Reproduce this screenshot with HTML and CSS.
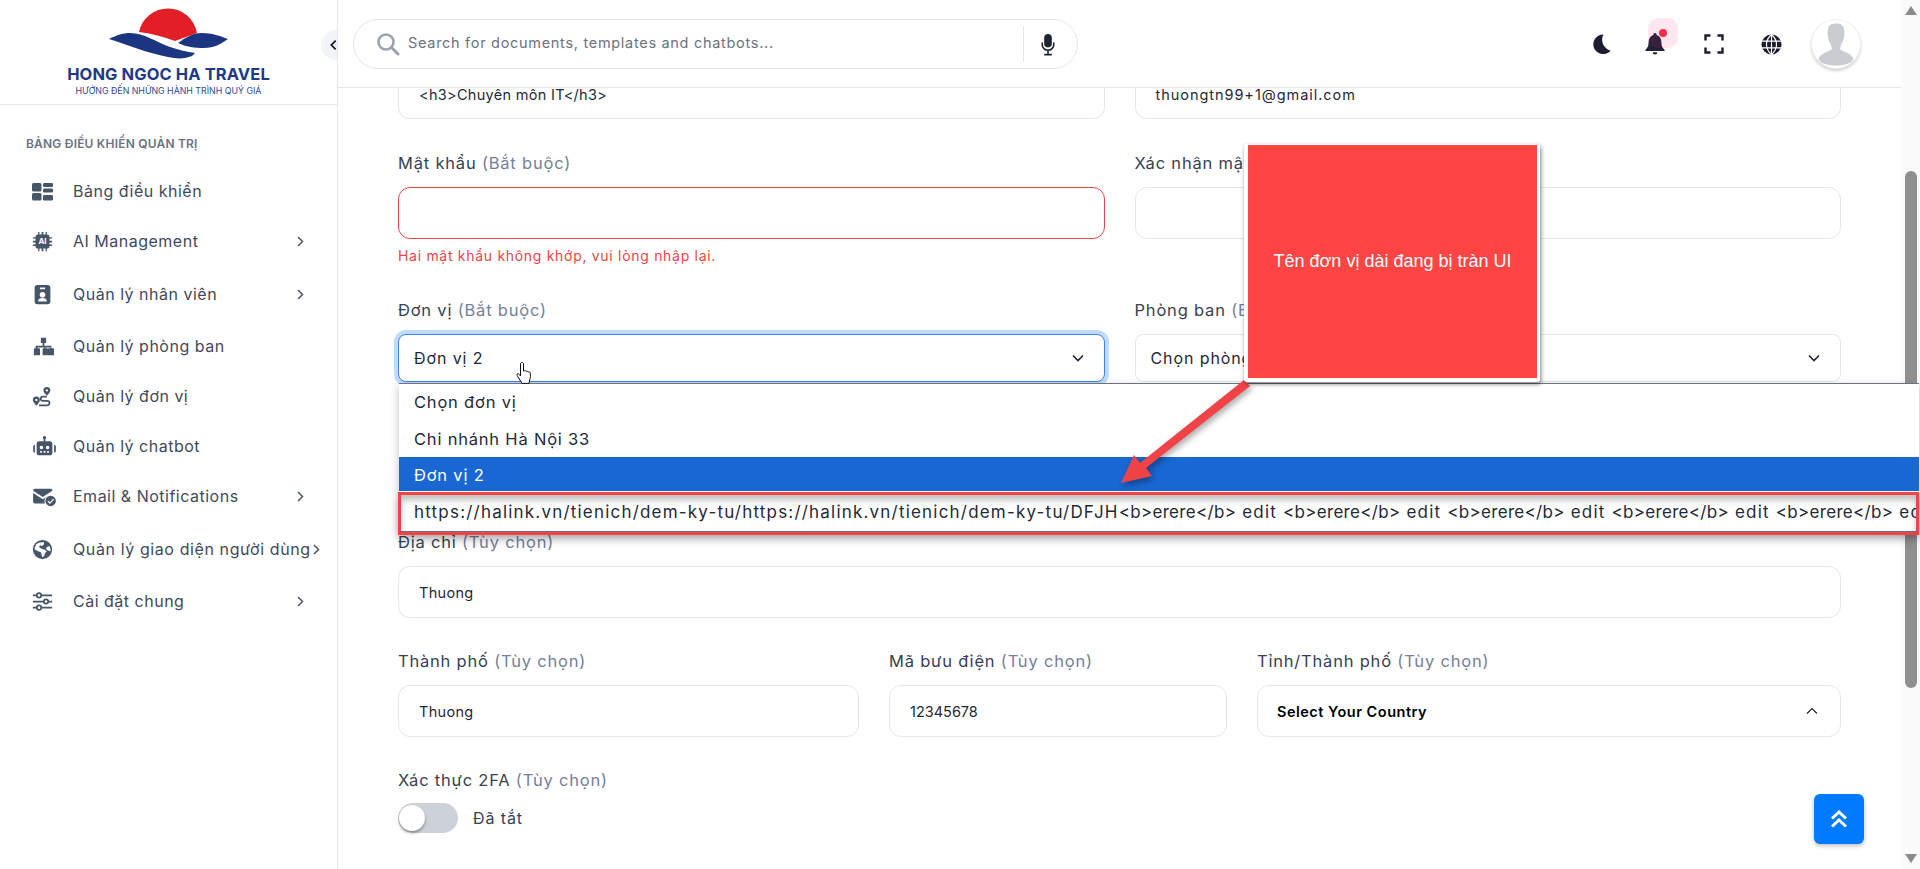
FILE: index.html
```html
<!DOCTYPE html>
<html lang="vi">
<head>
<meta charset="utf-8">
<title>Hong Ngoc Ha Travel</title>
<link rel="stylesheet" href="styles.css">
</head>
<body>
<div class="app">
  <aside class="sidebar">
    <div class="brand">
      <svg class="brand-mark" viewBox="0 0 130 52" width="130" height="52">
        <path fill="#e21f26" d="M35 24A29.500 29.500 0 0 1 93 25L71 33Q52 26 35 24Z"/>
        <path fill="#1c3580" d="M5 31C13 27 19 25 26 25c14 0 26 9 40 14 9 3 17 5 25 6l-3 3c-7 3-15 3-24 1C43 45 24 37 5 31Z"/>
        <path fill="#1c3580" d="M74 35c7-5 14-10 24-10 10 0 18 3 26 6-7 5-14 9-24 9-9 0-18-1-26-5Z"/>
      </svg>
      <div class="brand-name">HONG NGOC HA TRAVEL</div>
      <div class="brand-tag">HƯỚNG ĐẾN NHỮNG HÀNH TRÌNH QUÝ GIÁ</div>
    </div>
    <div class="nav-title">BẢNG ĐIỀU KHIỂN QUẢN TRỊ</div>
    <nav class="nav">
      <a class="nav-item"><svg class="nav-icon" viewBox="0 0 21 21"><rect x="0" y="2" width="9.500" height="8.500" rx="1.500"/><rect x="0" y="12" width="9.500" height="7.500" rx="1.500"/><rect x="11" y="2" width="10" height="4" rx="1.200"/><rect x="11" y="7.500" width="10" height="4" rx="1"/><rect x="11" y="14" width="10" height="5.500" rx="1.200"/></svg><span class="nav-label">Bảng điều khiển</span></a>
      <a class="nav-item"><span class="chip"><svg class="nav-icon" viewBox="0 0 24 24"><path d="M7 1h1.500v3H11V1h2v3h2.500V1H17v3a3 3 0 0 1 3 3h3v1.500h-3V11h3v2h-3v2.500h3V17h-3a3 3 0 0 1-3 3v3h-1.500v-3H13v3h-2v-3H8.500v3H7v-3a3 3 0 0 1-3-3H1v-1.500h3V13H1v-2h3V8.500H1V7h3a3 3 0 0 1 3-3Z"/></svg><span class="chip-text">AI</span></span><span class="nav-label">AI Management</span><svg class="nav-arrow" viewBox="0 0 7 11" width="7" height="11"><path d="M1 1l4.500 4.500L1 10" fill="none" stroke="#4b5563" stroke-width="1.500"/></svg></a>
      <a class="nav-item nav-far"><svg class="nav-icon" viewBox="0 0 24 24"><path fill-rule="evenodd" d="M6 1h12a3 3 0 0 1 3 3v16a3 3 0 0 1-3 3H6a3 3 0 0 1-3-3V4a3 3 0 0 1 3-3Zm3 3v2h6V4Zm3 5a3.200 3.200 0 1 0 0 6.400A3.200 3.200 0 0 0 12 9Zm-5 11h10c0-3-2-4-5-4s-5 1-5 4Z"/></svg><span class="nav-label">Quản lý nhân viên</span><svg class="nav-arrow" viewBox="0 0 7 11" width="7" height="11"><path d="M1 1l4.500 4.500L1 10" fill="none" stroke="#4b5563" stroke-width="1.500"/></svg></a>
      <a class="nav-item nav-mid"><svg class="nav-icon nav-icon-org" viewBox="0 0 24 24"><path d="M9 2h6v6h-2v3h8v3h2a1 1 0 0 1 1 1v6a1 1 0 0 1-1 1h-5a1 1 0 0 1-1-1v-6a1 1 0 0 1 1-1h2v-1h-6v1h2a1 1 0 0 1 1 1v6a1 1 0 0 1-1 1h-4a1 1 0 0 1-1-1v-6a1 1 0 0 1 1-1h1v-1H5v1h2a1 1 0 0 1 1 1v6a1 1 0 0 1-1 1H2a1 1 0 0 1-1-1v-6a1 1 0 0 1 1-1h1v-3h8V8H9Z"/></svg><span class="nav-label">Quản lý phòng ban</span></a>
      <a class="nav-item"><svg class="nav-icon" viewBox="0 0 24 24"><path fill-rule="evenodd" d="M17 1a4 4 0 0 1 4 4c0 2-2.500 4.500-4 6-1.500-1.500-4-4-4-6a4 4 0 0 1 4-4Zm0 2.700a1.300 1.300 0 1 0 0 2.600 1.300 1.300 0 0 0 0-2.600ZM5 12a4 4 0 0 1 4 4c0 2-2.500 5-4 6.500C3.500 21 1 18 1 16a4 4 0 0 1 4-4Zm0 2.700a1.300 1.300 0 1 0 0 2.600 1.300 1.300 0 0 0 0-2.600Z"/><path fill="none" stroke="#475569" stroke-width="2" d="M17 12h-4.500a2.500 2.500 0 0 0 0 5h5a2.500 2.500 0 0 1 0 5H8"/></svg><span class="nav-label">Quản lý đơn vị</span></a>
      <a class="nav-item"><svg class="nav-icon nav-icon-wide" viewBox="0 0 26 24"><path fill-rule="evenodd" d="M13 0a2 2 0 0 1 1 3.700V6h5a3 3 0 0 1 3 3v10a3 3 0 0 1-3 3H7a3 3 0 0 1-3-3V9a3 3 0 0 1 3-3h5V3.700A2 2 0 0 1 13 0ZM9.500 11a2 2 0 1 0 0 4 2 2 0 0 0 0-4Zm7 0a2 2 0 1 0 0 4 2 2 0 0 0 0-4ZM8 17v2h2v-2Zm4 0v2h2v-2Zm4 0v2h2v-2ZM2 10v9a2 2 0 0 1-2-2v-5a2 2 0 0 1 2-2Zm22 0a2 2 0 0 1 2 2v5a2 2 0 0 1-2 2Z"/></svg><span class="nav-label">Quản lý chatbot</span></a>
      <a class="nav-item"><svg class="nav-icon nav-icon-wide" viewBox="0 0 26 24"><path d="M2 3h18a2 2 0 0 1 2 2v.500l-11 7-11-7V5a2 2 0 0 1 2-2Z"/><path d="M0 8l11 7 7-4.500a7 7 0 0 0-4.500 9.500H2a2 2 0 0 1-2-2Z"/><path fill-rule="evenodd" d="M20 11a6 6 0 1 1 0 12 6 6 0 0 1 0-12Zm3 3.500-3.800 4-1.700-1.700-1 1 2.700 2.700 4.800-5Z"/></svg><span class="nav-label">Email &amp; Notifications</span><svg class="nav-arrow" viewBox="0 0 7 11" width="7" height="11"><path d="M1 1l4.500 4.500L1 10" fill="none" stroke="#4b5563" stroke-width="1.500"/></svg></a>
      <a class="nav-item nav-far"><svg class="nav-icon" viewBox="0 0 24 24"><path fill-rule="evenodd" d="M12 1a11 11 0 1 1 0 22 11 11 0 0 1 0-22ZM5 6a9 9 0 0 0-2 6l4 2 3 1 1 3 1 3 2-2 1-3 2-2-3-2-3-1-2-1-1-2 2-1 1 1 2-1 1-3c-3-1-7 0-9 2Zm12 3-1 2 2 2 3 1a9 9 0 0 0-1-6Z"/></svg><span class="nav-label nav-label-long">Quản lý giao diện người dùng</span><svg class="nav-arrow nav-arrow-tight" viewBox="0 0 7 11" width="7" height="11"><path d="M1 1l4.500 4.500L1 10" fill="none" stroke="#4b5563" stroke-width="1.500"/></svg></a>
      <a class="nav-item nav-mid"><svg class="nav-icon" viewBox="0 0 24 24" fill="none"><path stroke="#475569" stroke-width="2" fill="none" d="M1 5h22M1 12h22M1 19h22"/><circle cx="8" cy="5" r="2.500" fill="#fff" stroke="#475569" stroke-width="2"/><circle cx="16" cy="12" r="2.500" fill="#fff" stroke="#475569" stroke-width="2"/><circle cx="8" cy="19" r="2.500" fill="#fff" stroke="#475569" stroke-width="2"/></svg><span class="nav-label">Cài đặt chung</span><svg class="nav-arrow" viewBox="0 0 7 11" width="7" height="11"><path d="M1 1l4.500 4.500L1 10" fill="none" stroke="#4b5563" stroke-width="1.500"/></svg></a>
    </nav>
  </aside>

  <div class="content">
    <header class="topbar">
      <div class="search">
        <svg class="search-icon" viewBox="0 0 24 24" width="24" height="24"><circle cx="10" cy="10" r="7.500" fill="none" stroke="#9ca3af" stroke-width="2.600"/><path d="M15.500 15.500 22 22" stroke="#9ca3af" stroke-width="3" stroke-linecap="round"/></svg>
        <span class="search-text">Search for documents, templates and chatbots...</span>
        <span class="search-mic"><svg viewBox="0 0 16 24" width="16" height="23"><rect x="4" y="1" width="8" height="14" rx="4" fill="#1f2433"/><path d="M2 10v2a6 6 0 0 0 12 0v-2M8 18v4M4 22.500h8" fill="none" stroke="#1f2433" stroke-width="1.700"/></svg></span>
      </div>
      <div class="tools">
        <svg class="tool tool-moon" viewBox="0 0 24 24" width="20" height="20"><path fill="#1c1c30" d="M15 0.500A11.800 11.800 0 1 0 23.500 20 13.500 13.500 0 0 1 15 0.500Z"/></svg>
        <span class="tool-bell">
          <svg viewBox="0 0 24 24" width="22" height="22"><path fill="#22203a" d="M12 0a1.800 1.800 0 0 1 1.700 2.200C17 3.300 19 6 19 10c0 4 1 6 3.500 8.500v1H1.500v-1C4 16 5 14 5 10c0-4 2-6.700 5.300-7.800A1.800 1.800 0 0 1 12 0ZM9.500 21h5a2.500 2.500 0 0 1-5 0Z"/></svg>
          <span class="bell-halo"></span>
          <span class="bell-dot"></span>
        </span>
        <svg class="tool tool-screen" viewBox="0 0 20 20" width="20" height="20"><path fill="none" stroke="#1c1c30" stroke-width="2.400" d="M1.500 6.500V1.500h5M13.500 1.500h5v5M18.500 13.500v5h-5M6.500 18.500h-5v-5"/></svg>
        <svg class="tool tool-globe" viewBox="0 0 22 22" width="21" height="21"><circle cx="11" cy="11" r="10.500" fill="#1c1c30"/><path fill="none" stroke="#fff" stroke-width="1.200" d="M11 0v22M0 7.500h22M0 14.500h22M11 .5c-7 6-7 15 0 21M11 .5c7 6 7 15 0 21"/></svg>
        <span class="avatar"><svg viewBox="0 0 48 48" width="48" height="48"><path fill="#c9ccd0" d="M18 5c4-2 10-2 12 0 2 2 3 7 2 13-1 3-2 5-3 7l-1 4c3 3 11 4 13 9 1 2-2 5-6 6-7 2-15 2-22 0-4-1-7-4-6-6 2-5 10-6 13-9l-1-4c-1-2-3-5-3-8-1-5 0-10 2-12Z"/></svg></span>
      </div>
    </header>
    <main class="main">
      <div class="row row-two row-first">
        <div class="field"><div class="control control-clipped"><span class="value">&lt;h3&gt;Chuyên môn IT&lt;/h3&gt;</span></div></div>
        <div class="field"><div class="control control-clipped"><span class="value value-mail">thuongtn99+1@gmail.com</span></div></div>
      </div>
      <div class="row row-two row-pass">
        <div class="field">
          <div class="label">Mật khẩu <em>(Bắt buộc)</em></div>
          <div class="control control-error"></div>
          <div class="error">Hai mật khẩu không khớp, vui lòng nhập lại.</div>
        </div>
        <div class="field">
          <div class="label">Xác nhận mật khẩu <em>(Bắt buộc)</em></div>
          <div class="control"></div>
        </div>
      </div>
      <div class="row row-two row-unit">
        <div class="field">
          <div class="label">Đơn vị <em>(Bắt buộc)</em></div>
          <div class="control control-select control-focus"><span class="select-value">Đơn vị 2</span><svg class="caret" viewBox="0 0 12 8" width="12" height="8"><path d="M1 1.500 6 6.500l5-5" fill="none" stroke="#1f2937" stroke-width="1.700"/></svg></div>
        </div>
        <div class="field">
          <div class="label">Phòng ban <em>(Bắt buộc)</em></div>
          <div class="control control-select"><span class="select-value">Chọn phòng ban</span><svg class="caret" viewBox="0 0 12 8" width="12" height="8"><path d="M1 1.500 6 6.500l5-5" fill="none" stroke="#1f2937" stroke-width="1.700"/></svg></div>
        </div>
      </div>
      <div class="row">
        <div class="field">
          <div class="label">Địa chỉ <em>(Tùy chọn)</em></div>
          <div class="control"><span class="value">Thuong</span></div>
        </div>
      </div>
      <div class="row row-three">
        <div class="field">
          <div class="label">Thành phố <em>(Tùy chọn)</em></div>
          <div class="control"><span class="value">Thuong</span></div>
        </div>
        <div class="field">
          <div class="label">Mã bưu điện <em>(Tùy chọn)</em></div>
          <div class="control"><span class="value value-num">12345678</span></div>
        </div>
        <div class="field">
          <div class="label">Tỉnh/Thành phố <em>(Tùy chọn)</em></div>
          <div class="control control-select control-country"><span class="country">Select Your Country</span><svg class="caret" viewBox="0 0 12 8" width="12" height="8"><path d="M1 6.500 6 1.500l5 5" fill="none" stroke="#1f2937" stroke-width="1.200"/></svg></div>
        </div>
      </div>
      <div class="row">
        <div class="label label-2fa">Xác thực 2FA <em>(Tùy chọn)</em></div>
        <div class="toggle-line"><span class="toggle"><span class="knob"></span></span><span class="toggle-text">Đã tắt</span></div>
      </div>
    </main>
  </div>

  <div class="scrollbar">
    <span class="sb-up"></span>
    <span class="sb-thumb"></span>
    <span class="sb-down"></span>
  </div>

  <button class="collapse" type="button"><svg viewBox="0 0 8 12" width="8" height="12"><path d="M6.500 1 1.500 6l5 5" fill="none" stroke="#111827" stroke-width="2"/></svg></button>

  <ul class="options">
    <li class="option">Chọn đơn vị</li>
    <li class="option">Chi nhánh Hà Nội 33</li>
    <li class="option option-active">Đơn vị 2</li>
    <li class="option option-long">https://halink.vn/tienich/dem-ky-tu/https://halink.vn/tienich/dem-ky-tu/DFJH<span class="tag">&lt;b&gt;erere&lt;/b&gt;</span> edit <span class="tag">&lt;b&gt;erere&lt;/b&gt;</span> edit <span class="tag">&lt;b&gt;erere&lt;/b&gt;</span> edit <span class="tag">&lt;b&gt;erere&lt;/b&gt;</span> edit <span class="tag">&lt;b&gt;erere&lt;/b&gt;</span> edit</li>
  </ul>
  <div class="mark-outline"></div>

  <svg class="mark-arrow" viewBox="0 0 140 110" width="140" height="110"><polygon fill="#f04347" points="1,105 14,77 20,85 124,2 130,8 26,90 32,98"/></svg>
  <div class="mark-note">Tên đơn vị dài đang bị tràn UI</div>

  <svg class="hand" viewBox="0 0 18 24" width="18" height="24"><path fill="#fff" stroke="#111" stroke-width="1" d="M6 1.500c1 0 1.500.7 1.500 1.500v7l1-.2c.8-.4 1.600 0 1.800.5.800-.4 1.700 0 1.900.6.800-.3 1.800.1 2 1 .5 2.500.3 5-.5 7l-.7 3.500H6L2 16c-.8-1-1.200-2.500-.8-3 .5-.7 1.600-.3 2.300.7L4.500 15V3c0-.8.600-1.500 1.500-1.500Z"/></svg>

  <button class="to-top" type="button"><svg viewBox="0 0 18 20" width="18" height="20"><path d="M2 9.500 9 3l7 6.500M2 17.500 9 11l7 6.500" fill="none" stroke="#fff" stroke-width="3"/></svg></button>
</div>
</body>
</html>
```
FILE: styles.css
```css
* { box-sizing: border-box; }
html, body { margin: 0; height: 100%; overflow: hidden; background: #fff; }
body { font-family: Inter, "Noto Sans", "Liberation Sans", sans-serif; color: #1f2937; }
.app { position: relative; display: flex; width: 1920px; height: 869px; overflow: hidden; }

/* sidebar */
.sidebar { flex: 0 0 338px; border-right: 1px solid #e5e7eb; display: flex; flex-direction: column; }
.brand { height: 105px; border-bottom: 1px solid #e5e7eb; display: flex; flex-direction: column; align-items: center; padding-top: 8px; }
.brand-mark { display: block; flex: none; }
.brand-name { font-size: 16.500px; line-height: 18px; font-weight: 700; color: #1f3a85; letter-spacing: .1px; margin-top: 5px; white-space: nowrap; }
.brand-tag { font-size: 8.800px; line-height: 11px; color: #2f4790; white-space: nowrap; margin-top: 2px; }
.nav-title { font-size: 12px; line-height: 16px; letter-spacing: .2px; font-weight: 600; color: #6b7280; padding: 31px 0 0 26px; }
.nav { display: flex; flex-direction: column; padding-top: 14px; }
.nav-item { display: flex; align-items: center; height: 50px; padding-left: 32px; color: #374151; }
.nav-far { margin-top: 3px; }
.nav-mid { margin-top: 2px; }
.nav-icon { width: 21px; height: 21px; fill: #475569; flex: none; display: block; }
.nav-icon-wide { width: 25px; }
.nav-icon-org { width: 23px; }
.nav-label { font-size: 16px; letter-spacing: .5px; margin-left: 20px; white-space: nowrap; color: #3f4a5c; }
.nav-label-long { letter-spacing: .6px; }
.nav-icon-wide + .nav-label { margin-left: 16px; }
.nav-icon-org + .nav-label { margin-left: 18px; }
.nav-arrow { margin-left: auto; margin-right: 33px; flex: none; display: block; }
.nav-arrow-tight { margin-left: 2px; margin-right: 0; }
.chip { position: relative; display: block; flex: none; }
.chip-text { position: absolute; left: 0; right: 0; top: 5px; font-size: 8px; line-height: 11px; font-weight: 700; text-align: center; color: #fff; }

/* content */
.content { flex: 1; min-width: 0; display: flex; flex-direction: column; height: 869px; }
.topbar { flex: none; height: 88px; display: flex; align-items: flex-start; justify-content: space-between; border-bottom: 1px solid #e5e7eb; background: #fff; padding: 19px 0 0 15px; }
.search { display: flex; align-items: center; width: 725px; height: 50px; border: 1px solid #e5e7eb; border-radius: 25px; padding: 0 6px 0 22px; }
.search-icon { flex: none; }
.search-text { font-size: 14.500px; line-height: 22px; letter-spacing: .7px; color: #6b7280; margin: 0 0 2px 8px; white-space: nowrap; flex: 1; }
.search-mic { flex: none; width: 48px; height: 36px; border-left: 1px solid #e5e7eb; display: flex; align-items: center; justify-content: center; }
.tools { display: flex; align-items: center; height: 50px; padding-right: 40px; }
.tool { display: block; flex: none; }
.tool-moon { margin-right: 33px; }
.tool-bell { position: relative; display: block; width: 22px; height: 22px; margin-right: 38px; }
.tool-bell svg { display: block; }
.tool-screen { margin-right: 37px; }
.tool-globe { margin-right: 29px; }
.bell-halo { position: absolute; left: 4px; top: -15px; width: 30px; height: 30px; background: rgba(255, 40, 90, .11); border-radius: 10px; }
.bell-dot { position: absolute; left: 15px; top: -4px; width: 8px; height: 8px; background: #fb2c46; border-radius: 50%; }
.avatar { display: block; width: 50px; height: 50px; border-radius: 50%; border: 1px solid #eef0f2; background: #fff; box-shadow: 0 2px 3px rgba(0,0,0,.18); overflow: hidden; }
.avatar svg { display: block; }

/* form */
.main { flex: 1; min-height: 0; overflow: hidden; padding: 0 60px; display: flex; flex-direction: column; }
.row { flex: none; }
.row-two { display: grid; grid-template-columns: 1fr 1fr; column-gap: 30px; }
.row-three { display: grid; grid-template-columns: 461px 338px 1fr; column-gap: 30px; margin-top: 31px; }
.row-pass { margin-top: 32px; }
.row-unit { margin-top: 30px; margin-bottom: 148px; }
.label { font-size: 16.500px; line-height: 24px; letter-spacing: .8px; margin-bottom: 12px; color: #374151; white-space: nowrap; }
.label em { font-style: normal; color: #75809a; }
.control { height: 52px; border: 1px solid #e5e7eb; border-radius: 12px; display: flex; align-items: center; padding: 0 20px; background: #fff; }
.control-clipped { height: 31px; border-top: 0; border-radius: 0 0 12px 12px; align-items: flex-start; }
.control-clipped .value { line-height: 14px; }
.value { font-size: 14.500px; letter-spacing: .3px; color: #1f2937; white-space: nowrap; }
.value-mail { letter-spacing: .95px; }
.value-num { letter-spacing: 0; }
.control-error { border-color: #ef4444; }
.error { font-size: 14px; line-height: 24px; letter-spacing: .7px; color: #ef4444; margin-top: 5px; }
.control-select { height: 48px; padding: 0 20px 0 15px; justify-content: space-between; border-radius: 8px; }
.control-country { height: 52px; border-radius: 12px; padding-left: 19px; padding-right: 22px; }
.control-focus { border-color: #3b82f6; box-shadow: 0 0 0 4px #bfdbfe; }
.select-value { font-size: 16px; letter-spacing: .9px; color: #1f2937; white-space: nowrap; }
.country { font-size: 14.500px; letter-spacing: .5px; font-weight: 600; color: #000; white-space: nowrap; }
.caret { flex: none; }
.row-three + .row { margin-top: 31px; }
.label-2fa { margin-bottom: 11px; }
.toggle-line { display: flex; align-items: center; }
.toggle { display: block; position: relative; width: 60px; height: 30px; border-radius: 15px; background: #cdd2d8; }
.knob { position: absolute; left: 1px; top: 2px; width: 26px; height: 26px; border-radius: 50%; background: #fff; box-shadow: 0 2px 3px rgba(0,0,0,.35); }
.toggle-text { font-size: 16px; letter-spacing: .9px; margin-left: 15px; color: #374151; }

/* window scrollbar */
.scrollbar { flex: 0 0 19px; height: 869px; background: #fafafa; display: flex; flex-direction: column; align-items: center; }
.sb-up { width: 0; height: 0; border-left: 6px solid transparent; border-right: 6px solid transparent; border-bottom: 9px solid #8b8b8b; margin-top: 6px; }
.sb-thumb { width: 12px; height: 517px; background: #8f8f8f; border-radius: 6px; margin-top: 156px; }
.sb-down { width: 0; height: 0; border-left: 6px solid transparent; border-right: 6px solid transparent; border-top: 9px solid #8b8b8b; margin-top: auto; margin-bottom: 6px; }

/* overlays */
.collapse { position: absolute; left: 321px; top: 30px; width: 16px; height: 30px; padding: 0 0 0 9px; border: 0; border-radius: 15px 0 0 15px; background: #f1f5f9; display: flex; align-items: center; z-index: 3; }
.options { position: absolute; left: 399px; top: 383px; right: 1px; margin: 0; padding: 0; list-style: none; background: #fff; border-top: 1px solid #6b7280; border-bottom: 1px solid #6b7280; box-shadow: 0 3px 8px rgba(0,0,0,.25); z-index: 4; }
.option { height: 36.500px; line-height: 36.500px; font-size: 16.500px; letter-spacing: .8px; padding-left: 15px; color: #1f2937; white-space: nowrap; overflow: hidden; }
.option-active { height: 34px; line-height: 36px; background: #1967d2; color: #fff; }
.option-long { height: 40px; line-height: 43px; font-size: 17px; letter-spacing: 1.2px; }
.tag { letter-spacing: .3px; }
.mark-outline { position: absolute; left: 398px; top: 492px; width: 1521px; height: 43px; border: 3px solid #f04347; box-shadow: 0 5px 8px rgba(0,0,0,.22), inset 0 5px 6px rgba(0,0,0,.25); z-index: 5; }
.mark-arrow { position: absolute; left: 1120px; top: 378px; z-index: 6; filter: drop-shadow(2px 3px 3px rgba(0,0,0,.35)); }
.mark-note { position: absolute; left: 1244px; top: 144px; width: 296px; height: 238px; border: solid #fff; border-width: 1px 3px 4px 4px; background: #ff4444; color: #fff; font-family: "Liberation Sans", Arial, sans-serif; font-size: 18px; display: flex; align-items: center; justify-content: center; box-shadow: 1px 2px 4px rgba(0,0,0,.5); border-radius: 3px; z-index: 7; }
.hand { position: absolute; left: 516px; top: 361px; z-index: 8; }
.to-top { position: absolute; left: 1814px; top: 794px; width: 50px; height: 50px; border: 0; border-radius: 6px; padding: 0; background: #007bff; box-shadow: 0 2px 4px rgba(0,0,0,.25); display: flex; align-items: center; justify-content: center; z-index: 3; }
```
